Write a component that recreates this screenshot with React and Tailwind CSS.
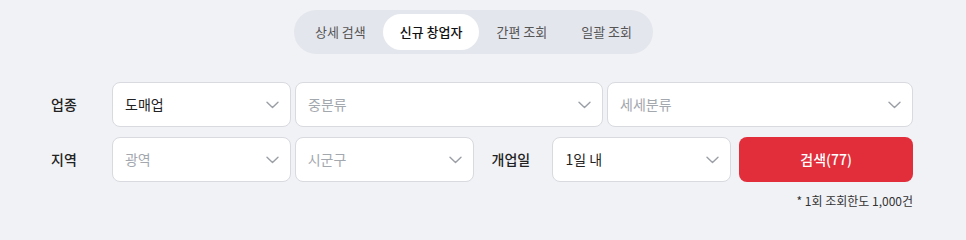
import React from "react";

const font = { fontFamily: '"Noto Sans CJK KR", "Noto Sans", sans-serif' };

function Chevron() {
    return (
        <svg width="13" height="8" viewBox="0 0 13 8" fill="none" className="shrink-0">
            <path d="M1 1.2l5.5 5.3 5.5-5.3" stroke="#9a9ea5" strokeWidth="1.4" strokeLinecap="round" strokeLinejoin="round" />
        </svg>
    );
}

function Select({ value, placeholder, className }) {
    return (
        <div
            className={
                "flex items-center justify-between h-[45px] pl-3 pr-[11px] bg-white border border-[#d8dae0] rounded-lg text-[14px] " +
                className
            }
        >
            <span className={value ? "text-[#222]" : "text-[#a3a7ae]"}>{value || placeholder}</span>
            <Chevron />
        </div>
    );
}

const tabs = ["상세 검색", "신규 창업자", "간편 조회", "일괄 조회"];

export default function App() {
    const active = "신규 창업자";

    return (
        <div className="w-[966px] min-h-screen h-[220px] bg-[#f1f2f6]" style={font}>
            <div className="ml-[40px] w-[873px] pt-[10px]">
                {/* tab switcher */}
                <div className="flex justify-center pr-[6px]">
                    <div className="flex p-1 rounded-full bg-[#e4e6ed]">
                        {tabs.map((t) => (
                            <span
                                key={t}
                                className={
                                    t === active
                                        ? "h-9 px-[17px] flex items-center rounded-full bg-white text-[13px] font-medium text-[#111]"
                                        : "h-9 px-[17px] flex items-center rounded-full text-[13px] text-[#555]"
                                }
                            >
                                {t}
                            </span>
                        ))}
                    </div>
                </div>

                <div className="mt-[28px] flex flex-col gap-[10px]">
                    <div className="flex items-center">
                        <span className="w-[72px] pl-[11px] text-[14px] font-medium text-[#222]">업종</span>
                        <Select value="도매업" className="w-[179px]" />
                        <Select placeholder="중분류" className="ml-1 w-[308px]" />
                        <Select placeholder="세세분류" className="ml-1 w-[306px]" />
                    </div>
                    <div className="flex items-center">
                        <span className="w-[72px] pl-[11px] text-[14px] font-medium text-[#222]">지역</span>
                        <Select placeholder="광역" className="w-[179px]" />
                        <Select placeholder="시군구" className="ml-1 w-[179px]" />
                        <span className="w-[79px] pl-[18px] text-[14px] font-medium text-[#222]">개업일</span>
                        <Select value="1일 내" className="w-[179px]" />
                        <button className="ml-2 w-[174px] h-[45px] rounded-lg bg-[#e22d3b] text-white text-[14px] font-medium">
                            검색(77)
                        </button>
                    </div>
                </div>

                <p className="mt-[10px] text-right text-[12px] text-[#333]">* 1회 조회한도 1,000건</p>
            </div>
        </div>
    );
}
